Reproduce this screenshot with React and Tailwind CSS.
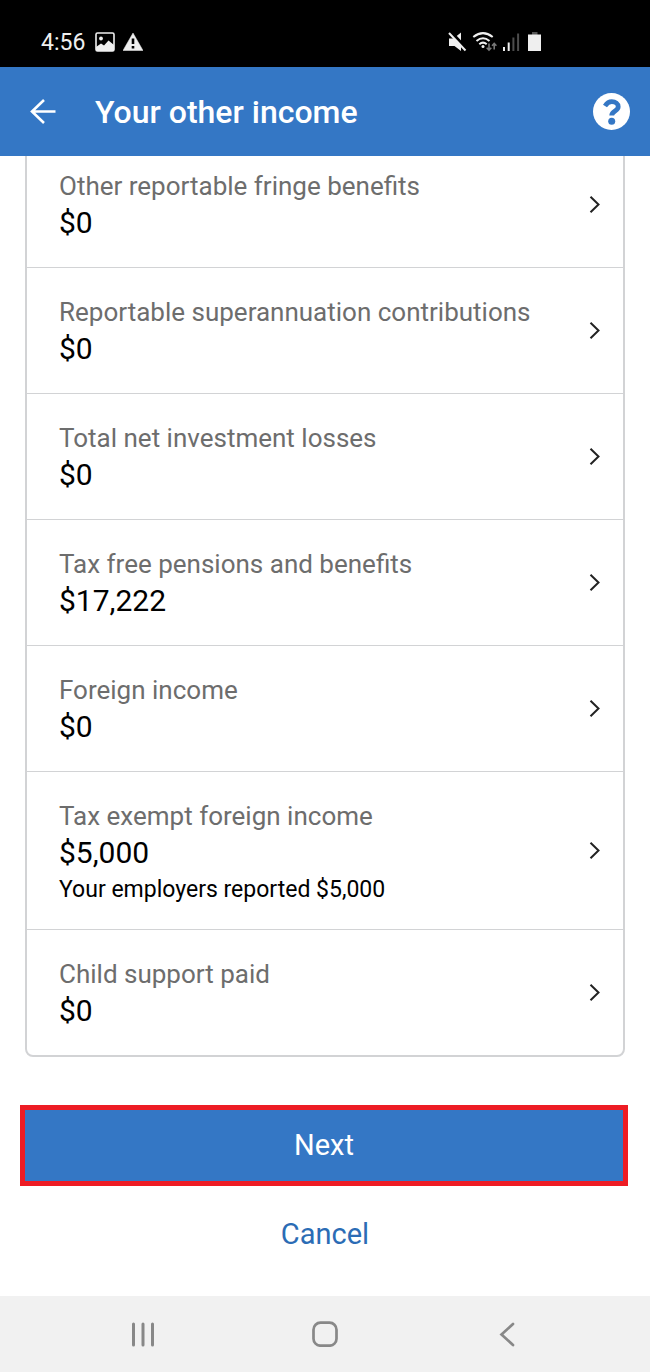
import React from 'react';

const incomeItems = [
  { label: 'Other reportable fringe benefits', value: '$0' },
  { label: 'Reportable superannuation contributions', value: '$0' },
  { label: 'Total net investment losses', value: '$0' },
  { label: 'Tax free pensions and benefits', value: '$17,222' },
  { label: 'Foreign income', value: '$0' },
  { label: 'Tax exempt foreign income', value: '$5,000', note: 'Your employers reported $5,000' },
  { label: 'Child support paid', value: '$0' },
];

function StatusBar() {
  return (
    <div className="flex h-[67px] items-end bg-black pb-[11px] pl-[41px] pr-[106px] text-[#efefef]">
      <span className="text-[23px] leading-[26px]">4:56</span>

      {/* Notifications */}
      <div className="mb-1 ml-[10px] flex items-center gap-2">
        <svg width="20" height="20" viewBox="0 0 20 20" fill="none">
          <rect x="1" y="1" width="18" height="18" rx="1.5" stroke="currentColor" strokeWidth="1.6" />
          <path d="M1 15 L6 11.500 L9 13.500 L13.500 8.500 L19 13 V19 H1 Z" fill="currentColor" />
          <circle cx="6" cy="6.500" r="1.900" fill="currentColor" />
        </svg>
        <svg width="20" height="20" viewBox="0 0 20 20">
          <path d="M10 1 L20 18.500 H0 Z" fill="currentColor" stroke="currentColor" strokeWidth=".5" strokeLinejoin="round" />
          <path d="M8.700 6.500 H11.300 V12 H8.700 Z M8.700 14 H11.300 V16.500 H8.700 Z" fill="#000" />
        </svg>
      </div>

      {/* Connectivity and battery */}
      <div className="mb-1 ml-auto flex items-end gap-[5px]">
        <svg width="19" height="20" viewBox="0 0 19 20">
          <path d="M1 6.500 H5.500 L13 .5 V19 L6.500 14 H1 Z" fill="currentColor" />
          <path d="M3 0 L19.500 17.500" stroke="#000" strokeWidth="3" />
          <path d="M1 1 L17.500 18.500" stroke="currentColor" strokeWidth="2" />
        </svg>
        <svg width="25" height="20" viewBox="0 0 25 20" fill="none">
          <g stroke="currentColor" strokeWidth="2">
            <path d="M1.300 5 Q11 -2.800 20.700 5" />
            <path d="M4.500 9 Q11 3.500 17.500 9" />
            <path d="M7.300 12.300 Q11 9 14.700 12.300" />
          </g>
          <circle cx="11" cy="14.500" r="1.500" fill="currentColor" />
          <path d="M17 11.500 V18 M14.700 15.800 L17 18.200 L19.300 15.800 M22.200 17.500 V11.500 M20 13.700 L22.200 11.500 L24.400 13.700" stroke="#777" strokeWidth="1.600" />
        </svg>
        <svg width="18" height="20" viewBox="0 0 18 20">
          <path d="M1 15 H3 V19 H1 Z M5.700 10.500 H7.700 V19 H5.700 Z" fill="currentColor" />
          <path d="M10.400 5.500 H12.400 V19 H10.400 Z M15.100 1.500 H17.100 V19 H15.100 Z" fill="#4d4d4d" />
        </svg>
        <svg width="19" height="20" viewBox="0 0 19 20">
          <path d="M7 0 H12.500 V3 H7 Z" fill="#555" />
          <rect x="3" y="2.500" width="13" height="16.500" fill="currentColor" />
        </svg>
      </div>
    </div>
  );
}

function Header() {
  return (
    <header className="z-10 flex h-[89px] items-center bg-[#3477c5] pl-[30px] pr-5 text-white">
      <button aria-label="Back">
        <svg width="26" height="26" viewBox="0 0 26 26" fill="none" stroke="currentColor" strokeWidth="2.600">
          <path d="M25.500 12.500 H2 M14 1 L2 12.500 L14 24" />
        </svg>
      </button>
      <h1 className="ml-[39px] text-[32px] font-medium leading-[40px]">Your other income</h1>
      <button aria-label="Help" className="ml-auto">
        <svg width="37" height="37" viewBox="0 0 37 37" fill="none">
          <circle cx="18.500" cy="18.500" r="18.500" fill="#fff" />
          <path d="M12 13 C14 10 16 8.700 18.800 8.700 C22.500 8.700 25.200 11 25.200 13.700 C25.200 18 18.700 17.800 18.700 22.500" stroke="#3477c5" strokeWidth="4.800" />
          <circle cx="18.700" cy="28.200" r="3.500" fill="#3477c5" />
        </svg>
      </button>
    </header>
  );
}

function IncomeRow({ item }) {
  return (
    <li className="border-b border-[#d2d3d5] last:border-b-0">
      <button className="flex w-full items-center justify-between pb-[25px] pl-8 pr-[22px] pt-[26px] text-left">
        <span className="flex flex-col">
          <span className="text-[26px] leading-[36px] text-[#6d6d6d]">{item.label}</span>
          <span className="text-[30px] leading-[38px]">{item.value}</span>
          {item.note && <span className="mt-1 text-[23px] leading-[28px]">{item.note}</span>}
        </span>
        <svg width="12" height="18" viewBox="0 0 12 18" fill="none" stroke="#222" strokeWidth="2">
          <path d="M1.500 .7 L9.500 8.500 L1.500 16.300" />
        </svg>
      </button>
    </li>
  );
}

function NavBar() {
  return (
    <nav className="mt-auto flex h-[76px] items-center justify-around bg-[#f1f1f1] px-[52px] text-[#888]">
      <button aria-label="Recent apps">
        <svg width="26" height="26" viewBox="0 0 26 26" stroke="currentColor" strokeWidth="3" strokeLinecap="round">
          <path d="M3.500 3 V24 M13 3 V24 M22.500 3 V24" />
        </svg>
      </button>
      <button aria-label="Home">
        <svg width="26" height="26" viewBox="0 0 26 26" fill="none" stroke="currentColor" strokeWidth="2.700">
          <rect x="1.500" y="1.700" width="23" height="23" rx="7" />
        </svg>
      </button>
      <button aria-label="Go back">
        <svg width="26" height="26" viewBox="0 0 26 26" fill="none" stroke="currentColor" strokeWidth="2.700" strokeLinecap="round">
          <path d="M19 3 L7.500 13.500 L19 24" />
        </svg>
      </button>
    </nav>
  );
}

export default function App() {
  return (
    <div className="flex min-h-screen flex-col bg-white font-[Roboto,sans-serif] text-black">
      <StatusBar />
      <Header />

      <main className="flex flex-col overflow-hidden">
        {/* The list is scrolled, so its first row runs under the header */}
        <ul className="-mt-4 mx-[25px] rounded-lg border-2 border-[#d2d3d5]">
          {incomeItems.map((item) => (
            <IncomeRow key={item.label} item={item} />
          ))}
        </ul>

        <button className="ml-5 mr-[22px] mt-12 h-[81px] border-[5px] border-[#ed1c24] bg-[#3477c5] text-[29px] text-white">
          Next
        </button>
        <button className="mx-auto mt-7 px-4 text-[29px] leading-[40px] text-[#2b6cb5]">Cancel</button>
      </main>

      <NavBar />
    </div>
  );
}
